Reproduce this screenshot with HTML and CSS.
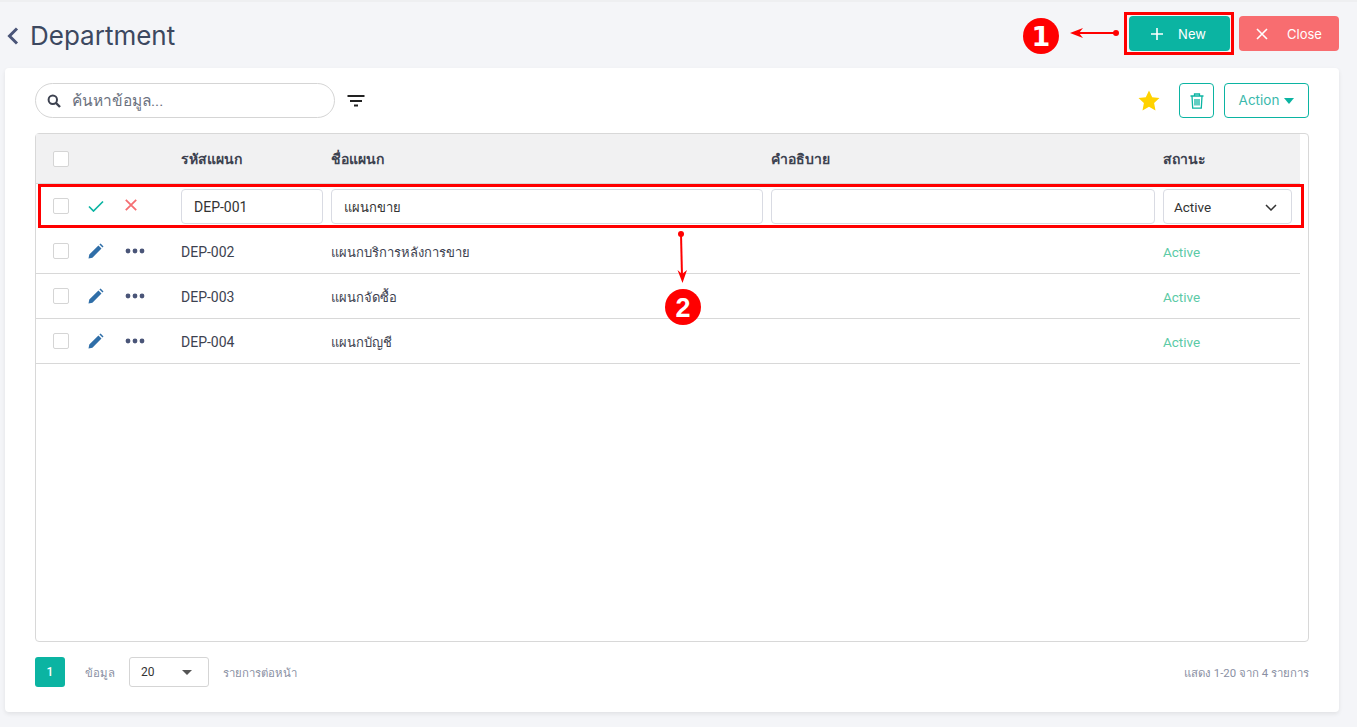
FILE: index.html
```html
<!DOCTYPE html>
<html lang="en">
<head>
    <meta charset="UTF-8">
    <meta name="viewport" content="width=device-width, initial-scale=1.0">
    <title>Department</title>
    <link rel="stylesheet" href="styles.css">
</head>
<body>
    <div class="page-header">
        <div class="page-title">
            <svg class="back-icon" width="12" height="18" viewBox="0 0 12 18"><path d="M10 1.500 L2.500 9 L10 16.500" fill="none" stroke="#4a5578" stroke-width="3"/></svg>
            <h1>Department</h1>
        </div>
        <div class="page-actions">
            <button class="btn btn-new">
                <svg width="14" height="14" viewBox="0 0 14 14"><path d="M7 1V13M1 7H13" stroke="#fff" stroke-width="1.6"/></svg>
                <span>New</span>
            </button>
            <button class="btn btn-close">
                <svg width="12" height="12" viewBox="0 0 12 12"><path d="M1 1L11 11M11 1L1 11" stroke="#fff" stroke-width="1.6"/></svg>
                <span>Close</span>
            </button>
        </div>
    </div>

    <div class="card">
        <div class="toolbar">
            <div class="search-box">
                <svg width="14" height="14" viewBox="0 0 14 14"><circle cx="5.8" cy="5.8" r="4.2" fill="none" stroke="#3d4250" stroke-width="2"/><path d="M9 9L13 13" stroke="#3d4250" stroke-width="2.4"/></svg>
                <span>ค้นหาข้อมูล...</span>
            </div>
            <svg class="filter-icon" width="18" height="12" viewBox="0 0 18 12"><path d="M0.500 1H17.500M3 6H15M7 10.500H11" stroke="#222" stroke-width="2"/></svg>
            <div class="toolbar-right">
                <svg class="star-icon" width="22" height="21" viewBox="0 0 22 21"><path d="M11 0.5L14.2 7.2L21.5 8.1L16.1 13.1L17.5 20.4L11 16.8L4.5 20.4L5.9 13.1L0.5 8.1L7.8 7.2Z" fill="#ffd200"/></svg>
                <button class="icon-btn">
                    <svg width="14" height="16" viewBox="0 0 14 16"><path d="M0.5 3H13.500M4.500 2.500V1H9.500V2.500M2 3L2.700 15.200H11.300L12 3M5 6V12.500M7 6V12.500M9 6V12.500" fill="none" stroke="#0bb4a2" stroke-width="1.3"/></svg>
                </button>
                <button class="action-btn">Action<i class="caret"></i></button>
            </div>
        </div>

        <div class="table-box">
            <div class="row head-row">
                <div class="cell-check"><i class="check"></i></div>
                <div>รหัสแผนก</div>
                <div>ชื่อแผนก</div>
                <div>คำอธิบาย</div>
                <div>สถานะ</div>
            </div>
            <div class="row edit-row">
                <div class="cell-check">
                    <i class="check"></i>
                    <svg class="ok-icon" width="16" height="12" viewBox="0 0 16 12"><path d="M1 6.5L5.5 11L15 1.5" fill="none" stroke="#0bb4a2" stroke-width="1.7"/></svg>
                    <svg class="cancel-icon" width="12" height="12" viewBox="0 0 12 12"><path d="M0.8 0.8L11.2 11.2M11.2 0.8L0.8 11.2" stroke="#f56e72" stroke-width="1.8"/></svg>
                </div>
                <div><div class="input">DEP-001</div></div>
                <div><div class="input thai-text">แผนกขาย</div></div>
                <div><div class="input"></div></div>
                <div>
                    <div class="input select">
                        <span>Active</span>
                        <svg width="12" height="7" viewBox="0 0 12 7"><path d="M1 1L6 6L11 1" fill="none" stroke="#333" stroke-width="1.5"/></svg>
                    </div>
                </div>
            </div>
            <div class="row data-row">
                <div class="cell-check">
                    <i class="check"></i>
                    <svg class="pen-icon" width="16" height="16" viewBox="0 0 16 16"><path d="M0.5 15.5L1.3 11.6L10.4 2.5L13.5 5.6L4.4 14.7ZM11.4 1.5L12.6 0.5L15.5 3.4L14.5 4.6Z" fill="#2f6ea8"/></svg>
                    <svg class="more-icon" width="20" height="6" viewBox="0 0 20 6"><circle cx="3" cy="3" r="2.4"/><circle cx="10" cy="3" r="2.4"/><circle cx="17" cy="3" r="2.4"/></svg>
                </div>
                <div class="cell-text">DEP-002</div>
                <div class="cell-text thai-text">แผนกบริการหลังการขาย</div>
                <div></div>
                <div class="cell-text status">Active</div>
            </div>
            <div class="row data-row">
                <div class="cell-check">
                    <i class="check"></i>
                    <svg class="pen-icon" width="16" height="16" viewBox="0 0 16 16"><path d="M0.5 15.5L1.3 11.6L10.4 2.5L13.5 5.6L4.4 14.7ZM11.4 1.5L12.6 0.5L15.5 3.4L14.5 4.6Z" fill="#2f6ea8"/></svg>
                    <svg class="more-icon" width="20" height="6" viewBox="0 0 20 6"><circle cx="3" cy="3" r="2.4"/><circle cx="10" cy="3" r="2.4"/><circle cx="17" cy="3" r="2.4"/></svg>
                </div>
                <div class="cell-text">DEP-003</div>
                <div class="cell-text thai-text">แผนกจัดซื้อ</div>
                <div></div>
                <div class="cell-text status">Active</div>
            </div>
            <div class="row data-row">
                <div class="cell-check">
                    <i class="check"></i>
                    <svg class="pen-icon" width="16" height="16" viewBox="0 0 16 16"><path d="M0.5 15.5L1.3 11.6L10.4 2.5L13.5 5.6L4.4 14.7ZM11.4 1.5L12.6 0.5L15.5 3.4L14.5 4.6Z" fill="#2f6ea8"/></svg>
                    <svg class="more-icon" width="20" height="6" viewBox="0 0 20 6"><circle cx="3" cy="3" r="2.4"/><circle cx="10" cy="3" r="2.4"/><circle cx="17" cy="3" r="2.4"/></svg>
                </div>
                <div class="cell-text">DEP-004</div>
                <div class="cell-text thai-text">แผนกบัญชี</div>
                <div></div>
                <div class="cell-text status">Active</div>
            </div>
        </div>

        <div class="pager">
            <div class="page-num">1</div>
            <span class="pager-label">ข้อมูล</span>
            <div class="page-size"><span>20</span><i class="caret-gray"></i></div>
            <span class="pager-label">รายการต่อหน้า</span>
            <span class="pager-label pager-total">แสดง 1-20 จาก 4 รายการ</span>
        </div>
    </div>

    <!-- red annotations drawn over the screenshot -->
    <svg class="notes" width="1357" height="727" viewBox="0 0 1357 727">
        <rect x="1125.5" y="13.5" width="107" height="40" fill="none" stroke="#f00" stroke-width="3"/>
        <rect x="39.5" y="185.5" width="1263" height="41" fill="none" stroke="#f00" stroke-width="3"/>
        <circle cx="1041" cy="36" r="18" fill="#f00"/>
        <text x="1041" y="46" class="note-num" font-size="27">1</text>
        <path d="M1116 33H1076" stroke="#f00" stroke-width="2"/>
        <circle cx="1116" cy="33" r="3" fill="#f00"/>
        <path d="M1070 33L1083 28L1079 33L1083 38Z" fill="#f00"/>
        <circle cx="683" cy="307" r="18" fill="#f00"/>
        <text x="683" y="317" class="note-num note-narrow" font-size="27">2</text>
        <path d="M681 234L682 276" stroke="#f00" stroke-width="2"/>
        <circle cx="681" cy="234" r="3" fill="#f00"/>
        <path d="M682.500 283L677.500 270L682 274L687 270Z" fill="#f00"/>
    </svg>
</body>
</html>
```

FILE: styles.css
```css
/* Basic styling */
body {
    font-family: Roboto, "Noto Sans", sans-serif;
    font-size: 14px;
    color: #3d4250;
    background-color: #f4f5f8;
    border-top: 2px solid #eeeff1;
    box-sizing: border-box;
    margin: 0;
    height: 100vh;
    display: flex;
    flex-direction: column;
    overflow: hidden;
}
button {
    font-family: Inter, sans-serif;
    cursor: pointer;
}

/* Page header */
.page-header {
    height: 66px;
    flex: none;
    display: flex;
    justify-content: space-between;
    align-items: flex-start;
    padding: 14px 18px 0 7px;
    box-sizing: border-box;
}
.page-title {
    display: flex;
    align-items: center;
    gap: 11px;
    height: 39px;
}
.page-title h1 {
    margin: 0;
    font-family: Inter, sans-serif;
    font-size: 26px;
    font-weight: 400;
    color: #3c4860;
}
.page-actions {
    display: flex;
    gap: 9px;
}
.btn {
    height: 35px;
    border: none;
    border-radius: 4px;
    color: white;
    font-size: 13px;
    display: flex;
    align-items: center;
    justify-content: center;
}
.btn-new {
    width: 101px;
    background-color: #0bb4a2;
    gap: 14px;
    padding: 0 3px 0 0;
}
.btn-close {
    width: 100px;
    background-color: #f86d70;
    gap: 19px;
}

/* Card */
.card {
    flex: 1;
    margin: 0 18px 15px 5px;
    padding: 15px 30px 25px;
    background-color: white;
    border-radius: 4px;
    box-shadow: 0 2px 4px rgba(0, 0, 0, 0.08);
    display: flex;
    flex-direction: column;
    min-height: 0;
}
.toolbar {
    display: flex;
    align-items: center;
    height: 35px;
    margin-bottom: 15px;
}
.search-box {
    width: 300px;
    height: 35px;
    box-sizing: border-box;
    border: 1px solid #d5d5d5;
    border-radius: 18px;
    display: flex;
    align-items: center;
    gap: 11px;
    padding-left: 11px;
    font-size: 15.5px;
    color: #6c7280;
}
.filter-icon {
    margin-left: 12px;
}
.toolbar-right {
    margin-left: auto;
    display: flex;
    align-items: center;
}
.star-icon {
    margin-right: 19px;
}
.icon-btn {
    width: 35px;
    height: 35px;
    background: white;
    border: 1px solid #0bb4a2;
    border-radius: 4px;
    padding: 0;
    display: flex;
    align-items: center;
    justify-content: center;
    margin-right: 10px;
}
.action-btn {
    width: 85px;
    height: 35px;
    background: white;
    border: 1px solid #0bb4a2;
    border-radius: 4px;
    color: #3ab9ac;
    font-size: 13.5px;
    padding: 0 0 2px;
}
.caret {
    display: inline-block;
    margin-left: 5px;
    border-left: 5px solid transparent;
    border-right: 5px solid transparent;
    border-top: 6px solid #0bb4a2;
    vertical-align: 1px;
}

/* Table */
.table-box {
    flex: 1;
    border: 1px solid #d8d8d8;
    border-radius: 4px;
    padding-right: 8px;
    min-height: 0;
}
.row {
    display: grid;
    grid-template-columns: 145px 150px 440px 392px 137px;
    align-items: center;
}
.head-row {
    height: 50px;
    background-color: #f1f1f2;
    border-bottom: 1px solid #d8d8d8;
    box-sizing: border-box;
    font-weight: 600;
    color: #3d4250;
}
.edit-row {
    height: 45px;
    padding-bottom: 1px;
    box-sizing: border-box;
}
.data-row {
    height: 45px;
    border-bottom: 1px solid #d8d8d8;
    box-sizing: border-box;
}
.cell-text {
    padding-top: 2px;
}
.thai-text {
    font-size: 13px;
}
.cell-check {
    display: flex;
    align-items: center;
    padding-left: 17px;
}
.check {
    width: 16px;
    height: 16px;
    box-sizing: border-box;
    border: 1px solid #d5d5d5;
    border-radius: 2px;
    background: white;
    flex: none;
}
.ok-icon {
    margin-left: 19px;
}
.cancel-icon {
    margin: 0 0 3px 21px;
}
.pen-icon {
    margin-left: 19px;
}
.more-icon {
    margin-left: 21px;
    fill: #4a5578;
}
.input {
    height: 35px;
    margin-right: 8px;
    border: 1px solid #d9dbe3;
    border-radius: 4px;
    box-sizing: border-box;
    padding: 2px 0 0 12px;
    display: flex;
    align-items: center;
    color: #333;
}
.select {
    padding: 2px 14px 0 10px;
    justify-content: space-between;
    font-size: 13.5px;
}
.status {
    color: #5ccaa6;
    font-size: 13.5px;
}

/* Pagination */
.pager {
    flex: none;
    display: flex;
    align-items: center;
    margin-top: 15px;
    height: 30px;
    font-size: 11.4px;
    color: #8a8fa3;
}
.page-num {
    width: 30px;
    height: 30px;
    background-color: #0bb4a2;
    border-radius: 3px;
    color: white;
    display: flex;
    align-items: center;
    justify-content: center;
    font-weight: 500;
    font-size: 12px;
}
.pager-label {
    margin-left: 20px;
    padding-top: 2px;
}
.page-size {
    width: 80px;
    height: 30px;
    margin-left: 14px;
    border: 1px solid #d5d5d5;
    border-radius: 3px;
    box-sizing: border-box;
    display: flex;
    align-items: center;
    justify-content: space-between;
    padding: 0 16px 0 11px;
    color: #333;
    font-size: 12px;
}
.page-size + .pager-label {
    margin-left: 14px;
}
.caret-gray {
    border-left: 5px solid transparent;
    border-right: 5px solid transparent;
    border-top: 5px solid #555;
}
.pager-total {
    margin-left: auto;
}

/* Annotations */
.notes {
    position: absolute;
    top: 0;
    left: 0;
    pointer-events: none;
}
.note-num {
    font-family: "DejaVu Sans", sans-serif;
    font-weight: bold;
    fill: white;
    text-anchor: middle;
}
.note-narrow {
    font-family: "Liberation Sans", sans-serif;
}
```
